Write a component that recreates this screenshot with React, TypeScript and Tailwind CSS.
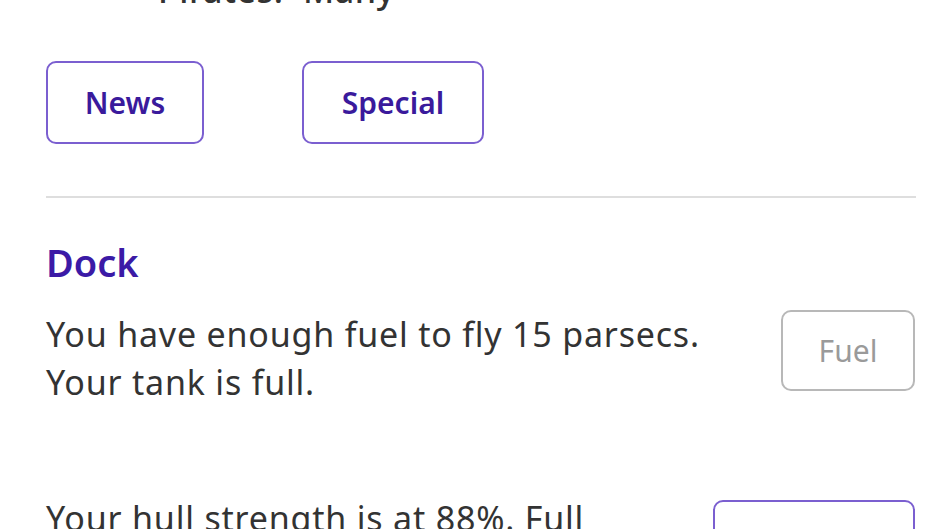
import React from "react";

export default function App() {
  const font = { fontFamily: "'Noto Sans', Lato, sans-serif" };
  return (
    <div className="w-[940px] h-[529px] overflow-hidden bg-white" style={font}>
      <div className="pl-[46px] pr-[24px]">
        <div className="-mt-[30px] flex h-[40px] items-end text-[34px] leading-[40px] font-medium tracking-[0.5px] text-[#333]">
          <span className="ml-[112px] w-[145px]">Pirates:</span>
          <span>Many</span>
        </div>
        <div className="mt-[51px] flex gap-[98px]">
          <button className="h-[83px] w-[158px] rounded-[10px] border-2 border-[#7b5fd0] text-[30px] font-semibold text-[#3a1a9c]">
            News
          </button>
          <button className="h-[83px] w-[182px] rounded-[10px] border-2 border-[#7b5fd0] text-[30px] font-semibold text-[#3a1a9c]">
            Special
          </button>
        </div>
        <div className="mt-[52px] h-[2px] bg-[#dedede]" />
        <h2 className="mt-[42px] text-[38px] leading-[44px] font-semibold text-[#3b1aa6]">Dock</h2>
        <div className="mt-[22px] flex items-start justify-between">
          <p className="mt-[4px] text-[34px] leading-[48px] tracking-[0.8px] text-[#333]">
            You have enough fuel to fly 15 parsecs.
            <br />
            Your tank is full.
          </p>
          <button className="mt-[4px] mr-[1px] h-[81px] w-[134px] rounded-[10px] border-2 border-[#b8b8b8] text-[30px] text-[#9a9a9a]">
            Fuel
          </button>
        </div>
        <div className="mt-[94px] flex items-start justify-between">
          <p className="-mt-[6px] text-[34px] leading-[48px] tracking-[0.8px] text-[#333]">
            Your hull strength is at 88%. Full
          </p>
          <button className="mr-[1px] h-[81px] w-[202px] rounded-[10px] border-2 border-[#7b5fd0] text-[30px] font-semibold text-[#3a1a9c]">
            Repair
          </button>
        </div>
      </div>
    </div>
  );
}
